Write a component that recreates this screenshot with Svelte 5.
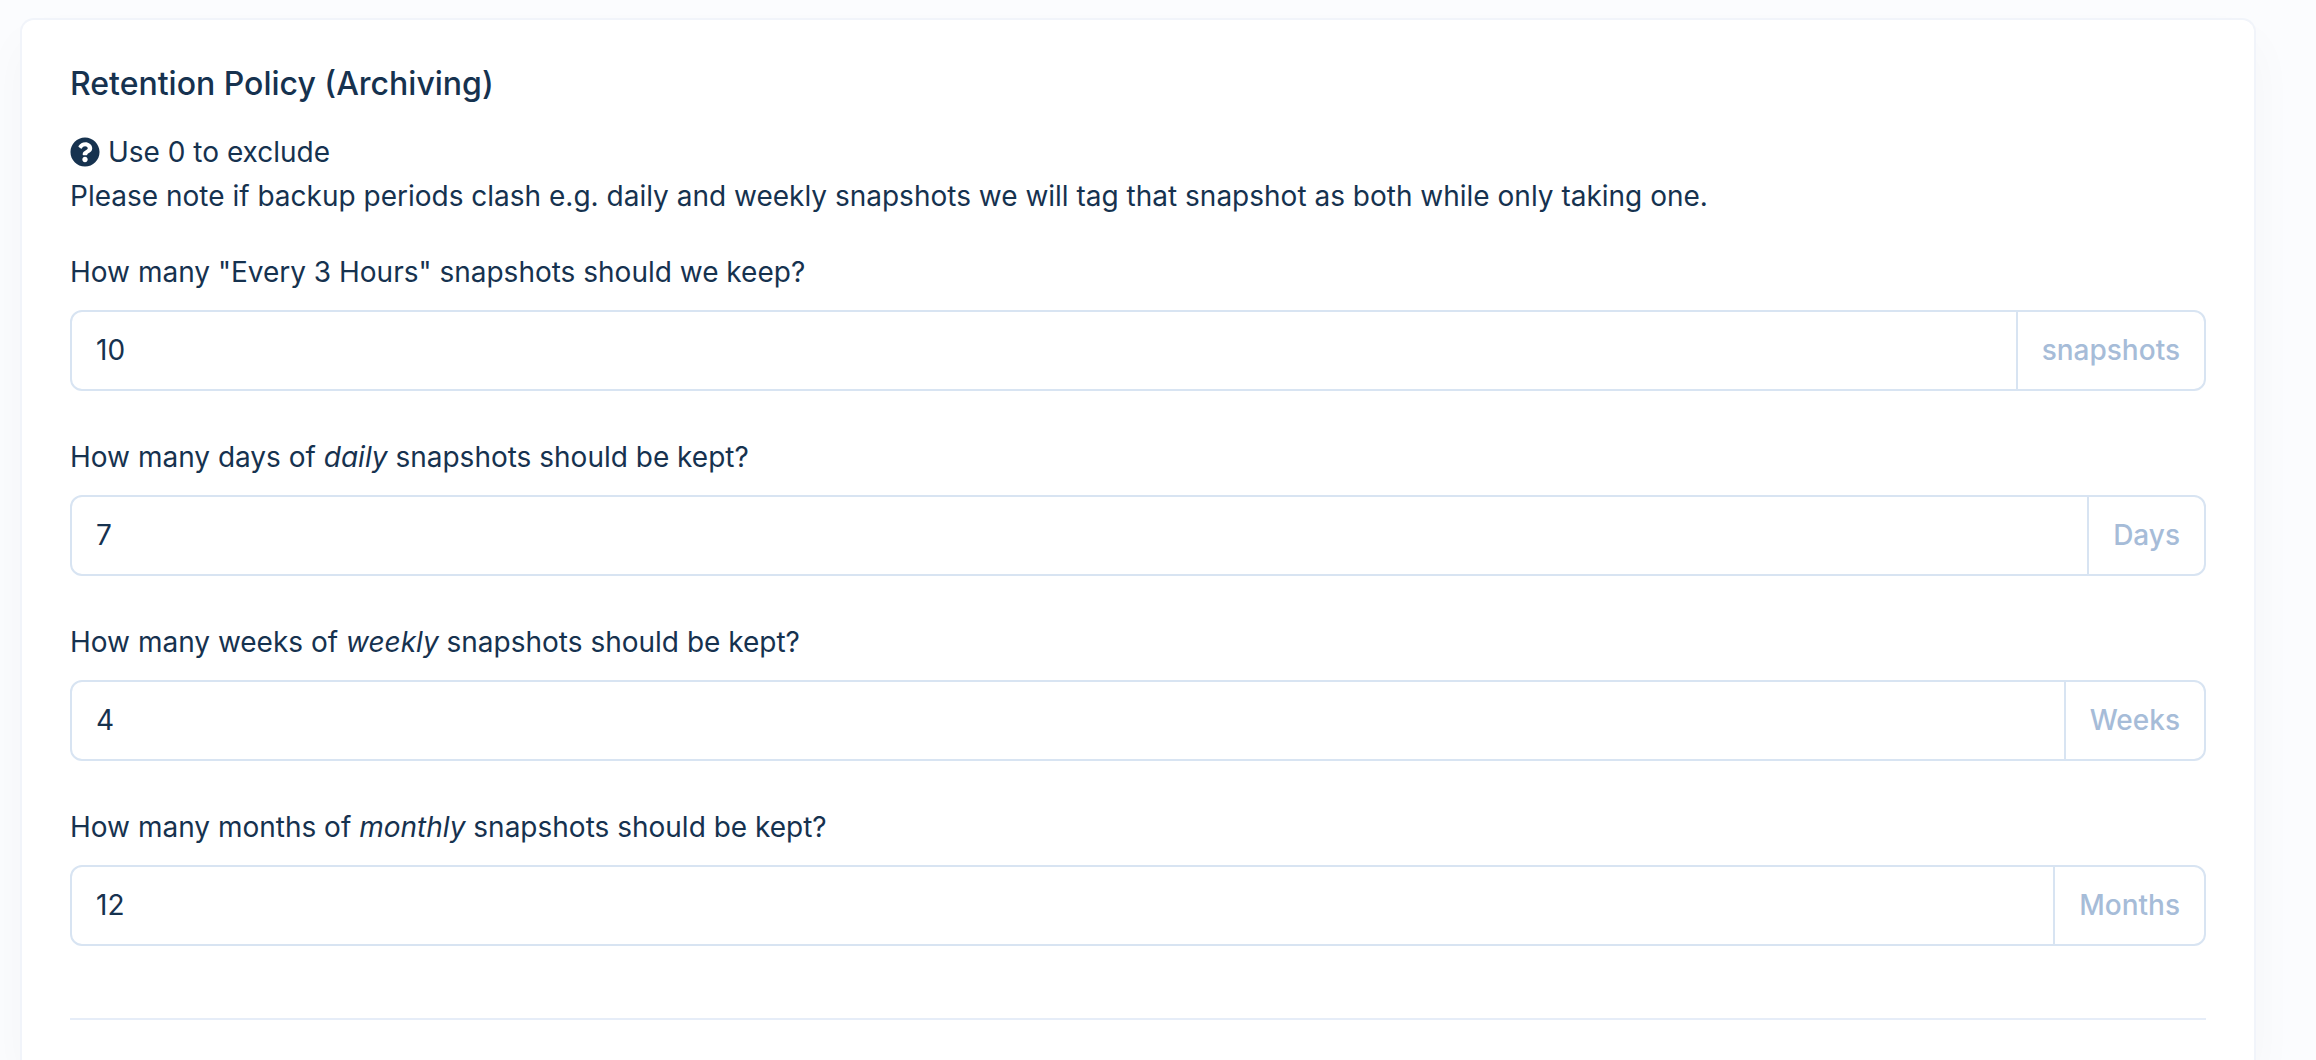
<script>
  let fields = $state([
    { id: 'hourly', before: 'How many "Every 3 Hours" snapshots should we keep?', em: '', after: '', value: '10', unit: 'snapshots' },
    { id: 'daily', before: 'How many days of ', em: 'daily', after: ' snapshots should be kept?', value: '7', unit: 'Days' },
    { id: 'weekly', before: 'How many weeks of ', em: 'weekly', after: ' snapshots should be kept?', value: '4', unit: 'Weeks' },
    { id: 'monthly', before: 'How many months of ', em: 'monthly', after: ' snapshots should be kept?', value: '12', unit: 'Months' }
  ]);
</script>

<main class="page">
  <section class="card">
    <h2>Retention Policy (Archiving)</h2>
    <p class="note">
      <span class="hint">
        <svg class="help" viewBox="0 0 512 512" aria-hidden="true">
          <path fill="currentColor" d="M504 256c0 136.997-111.043 248-248 248S8 392.997 8 256C8 119.083 119.043 8 256 8s248 111.083 248 248zM262.655 90c-54.497 0-89.255 22.957-116.549 63.758-3.536 5.286-2.353 12.415 2.715 16.258l34.699 26.31c5.205 3.947 12.621 3.008 16.665-2.122 17.864-22.658 30.113-35.797 57.303-35.797 20.429 0 45.698 13.148 45.698 32.958 0 14.976-12.363 22.667-32.534 33.976C247.128 238.528 216 254.941 216 296v4c0 6.627 5.373 12 12 12h56c6.627 0 12-5.373 12-12v-1.333c0-28.462 83.186-29.647 83.186-106.667 0-58.002-60.165-102-116.531-102zM256 338c-25.365 0-46 20.635-46 46 0 25.364 20.635 46 46 46s46-20.636 46-46c0-25.365-20.635-46-46-46z" />
        </svg>
        Use 0 to exclude
      </span>
      Please note if backup periods clash e.g. daily and weekly snapshots we will tag that snapshot as both while only taking one.
    </p>
    <form class="fields">
      {#each fields as field (field.id)}
        <div class="field">
          <label for={field.id}>{field.before}{#if field.em}<em>{field.em}</em>{/if}{field.after}</label>
          <div class="group">
            <input id={field.id} type="text" inputmode="numeric" aria-describedby="{field.id}-unit" bind:value={field.value} />
            <span class="unit" id="{field.id}-unit">{field.unit}</span>
          </div>
        </div>
      {/each}
    </form>
    <hr />
  </section>
</main>

<style>
  :global(body) {
    background: #fbfcfe;
  }

  .page {
    box-sizing: border-box;
    display: flex;
    flex-direction: column;
    min-height: 100vh;
    padding: 18px 60px 0 20px;
    overflow: hidden;
    font-family: Inter, "Liberation Sans", sans-serif;
    font-size: 28px;
    line-height: 44px;
    color: #16324f;
  }

  .card {
    flex: 1;
    padding: 40px 48px;
    border: 2px solid #f1f4fa;
    border-bottom: 0;
    border-radius: 14px 14px 0 0;
    background: #fff;
    box-shadow: 0 24px 48px rgba(18, 38, 63, 0.03);
  }

  h2 {
    margin: 0 0 22px;
    font-size: 32px;
    font-weight: 500;
    line-height: 48px;
  }

  .note {
    margin: 0 0 32px;
  }

  .hint {
    display: flex;
    align-items: center;
    gap: 8px;
  }

  .help {
    width: 30px;
    height: 30px;
  }

  .fields {
    display: flex;
    flex-direction: column;
    gap: 44px;
  }

  .field {
    display: flex;
    flex-direction: column;
    gap: 16px;
  }

  .group {
    display: flex;
    border: 2px solid #d8e4f2;
    border-radius: 12px;
    background: #fff;
    line-height: 45px;
  }

  .group:focus-within {
    border-color: #8fb3dc;
  }

  input {
    flex: 1;
    min-width: 0;
    margin: 0;
    padding: 16px 24px;
    border: 0;
    outline: 0;
    background: transparent;
    font: inherit;
    color: inherit;
  }

  .unit {
    display: flex;
    align-items: center;
    padding: 0 24px;
    border-left: 2px solid #d8e4f2;
    font-weight: 500;
    color: #a6bcd8;
  }

  hr {
    margin: 72px 0 0;
    border: 0;
    border-top: 2px solid #e6edf8;
  }
</style>
